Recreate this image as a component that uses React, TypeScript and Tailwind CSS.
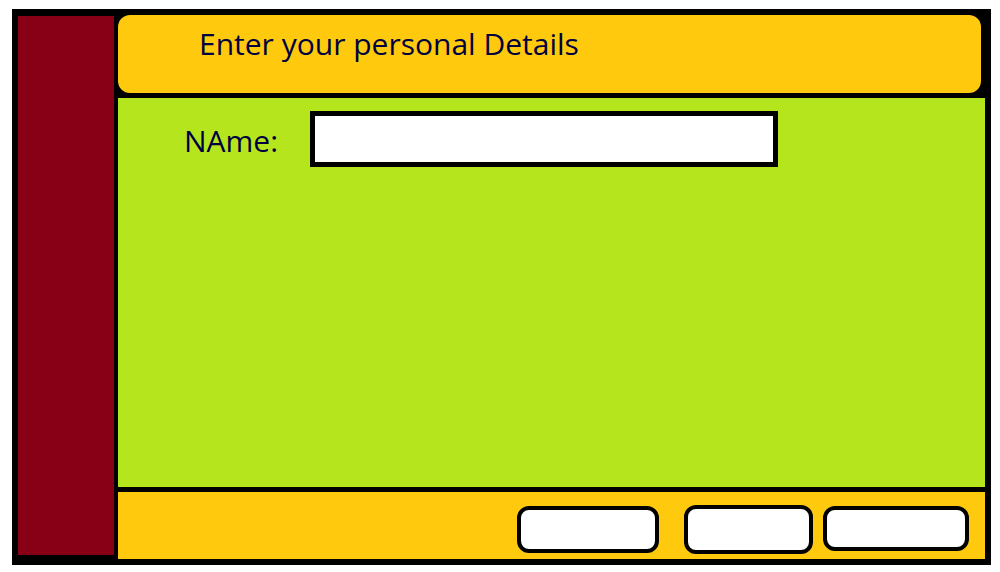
export default function App() {
  return (
    <div className="w-[1000px] h-[572px] bg-white relative" style={{ fontFamily: '"Open Sans", sans-serif' }}>
      <div className="absolute left-[12px] top-[9px] w-[979px] h-[556px] border-[6px] border-black bg-black flex">
        <div className="w-[100px] mt-[1px] mb-[4px] bg-[#880015] border-r-[4px] border-black" />
        <div className="flex-1 flex flex-col bg-[#b5e61d]">
          <div className="bg-black pr-[4px] pb-[5px]">
            <div className="h-[78px] rounded-[12px] bg-[#ffc90e] pl-[81px] pt-[11px]">
              <span className="text-[30px] leading-[36px] text-[#000040]">Enter your personal Details</span>
            </div>
          </div>
          <div className="flex-1 flex items-start pt-[13px] pl-[66px]">
            <span className="w-[126px] h-[56px] pt-[3px] flex items-center text-[30px] leading-[36px] text-[#000040]">NAme:</span>
            <div className="w-[468px] h-[56px] border-[5px] border-black bg-white" />
          </div>
          <div className="h-[72px] border-t-[5px] border-black bg-[#ffc90e] flex items-start justify-end pr-[16px] pt-[13px]">
            <div className="w-[142px] h-[47px] mt-[1px] border-[4px] border-black rounded-[12px] bg-white" />
            <div className="w-[129px] h-[49px] ml-[25px] border-[4px] border-black rounded-[12px] bg-white" />
            <div className="w-[146px] h-[45px] mt-[1px] ml-[10px] border-[4px] border-black rounded-[12px] bg-white" />
          </div>
        </div>
      </div>
    </div>
  );
}
